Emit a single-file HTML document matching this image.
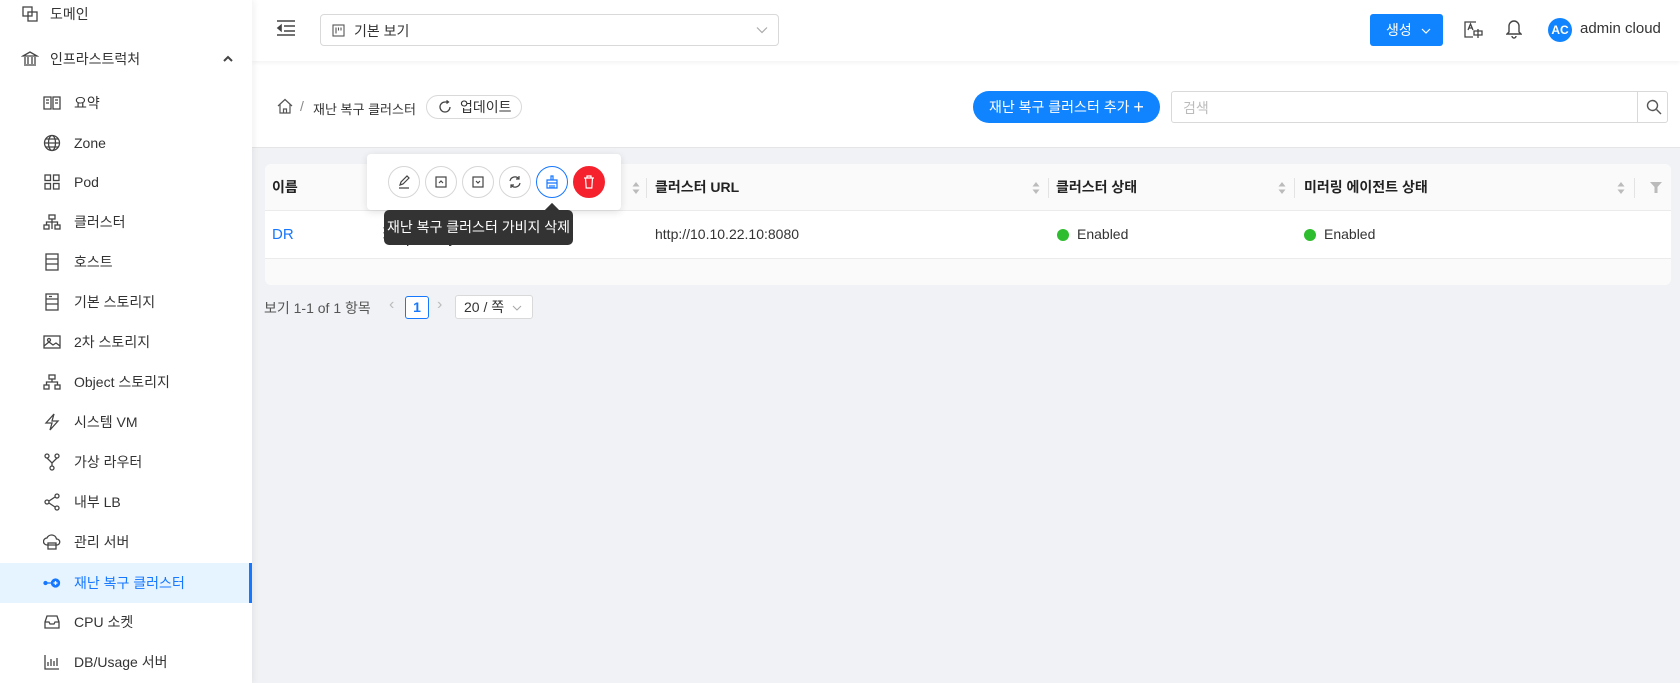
<!DOCTYPE html>
<html><head><meta charset="utf-8"><style>
*{box-sizing:border-box;margin:0;padding:0}
body{width:1680px;height:683px;overflow:hidden;font-family:"Liberation Sans","Noto Sans CJK KR",sans-serif;font-size:14px;color:#333;background:#f0f2f5;position:relative}
.abs{position:absolute}
.side{left:0;top:0;width:252px;height:683px;background:#fff;box-shadow:2px 0 6px rgba(0,0,0,.06);z-index:2}
.it{position:absolute;left:0;width:252px;height:40px;display:flex;align-items:center;font-size:14px;color:#333}
.it svg{position:absolute;width:18px;height:18px;fill:none;stroke:#444;stroke-width:1.3}
.it .t{position:absolute}
.sel{background:#e6f4ff;color:#1677ff;border-right:3px solid #1677ff}
.hdr{left:252px;top:0;width:1428px;height:61px;background:#fff;box-shadow:0 2px 4px rgba(0,0,0,.05);z-index:1}
.bread{left:252px;top:61px;width:1428px;height:87px;background:#fff;border-bottom:1px solid #e5e5e5}
.card{left:265px;top:164px;width:1406px;height:121px;background:#fafafa;border-radius:6px;overflow:hidden}
.th{position:absolute;top:0;height:47px;line-height:47px;font-weight:bold;font-size:14px;color:#222}
.div{position:absolute;top:14px;width:1px;height:20px;background:#e3e3e3}
.sort{position:absolute;top:17px;width:8px;height:14px}
.cbtn{position:absolute;top:166px;width:32px;height:32px;border-radius:50%;border:1px solid #d6d6d6;background:#fff;display:flex;align-items:center;justify-content:center}
.cbtn svg{width:16px;height:16px;fill:none;stroke:#444;stroke-width:1.2}
</style></head><body>
<div class="abs side">
 <div class="it" style="top:-6px"><svg style="left:21px" viewBox="0 0 18 18"><rect x="2" y="2" width="9" height="9"/><rect x="7" y="7" width="9" height="9"/></svg><span class="t" style="left:50px">도메인</span></div>
 <div class="it" style="top:39px"><svg style="left:21px" viewBox="0 0 18 18"><path d="M2 6L9 2l7 4H2zM3 15h12M4 7v7M7 7v7M11 7v7M14 7v7"/></svg><span class="t" style="left:50px">인프라스트럭처</span><svg style="left:222px;width:12px" viewBox="0 0 12 18"><path d="M2 11l4-4 4 4" stroke-width="2"/></svg></div>
 <div class="it" style="top:83px"><svg style="left:43px" viewBox="0 0 18 18"><path d="M1 3h7v12H1zM10 3h7v12h-7zM3 6h3M3 9h3M12 6h3M12 9h3"/></svg><span class="t" style="left:74px">요약</span></div>
 <div class="it" style="top:123px"><svg style="left:43px" viewBox="0 0 18 18"><circle cx="9" cy="9" r="7.5"/><ellipse cx="9" cy="9" rx="3.5" ry="7.5"/><path d="M1.5 9h15M3 5h12M3 13h12"/></svg><span class="t" style="left:74px">Zone</span></div>
 <div class="it" style="top:162px"><svg style="left:43px" viewBox="0 0 18 18"><rect x="2" y="2" width="5.5" height="5.5"/><rect x="10.5" y="2" width="5.5" height="5.5"/><rect x="2" y="10.5" width="5.5" height="5.5"/><rect x="10.5" y="10.5" width="5.5" height="5.5"/></svg><span class="t" style="left:74px">Pod</span></div>
 <div class="it" style="top:202px"><svg style="left:43px" viewBox="0 0 18 18"><rect x="6" y="2" width="6" height="4"/><rect x="1" y="12" width="5" height="4"/><rect x="12" y="12" width="5" height="4"/><path d="M9 6v3M3.5 12V9h11v3M9 9v7"/></svg><span class="t" style="left:74px">클러스터</span></div>
 <div class="it" style="top:242px"><svg style="left:43px" viewBox="0 0 18 18"><rect x="3" y="1" width="12" height="16"/><path d="M3 6h12M3 11h12"/></svg><span class="t" style="left:74px">호스트</span></div>
 <div class="it" style="top:282px"><svg style="left:43px" viewBox="0 0 18 18"><rect x="3" y="1" width="12" height="16"/><path d="M3 6h12M3 11h12M6 3.5h3"/></svg><span class="t" style="left:74px">기본 스토리지</span></div>
 <div class="it" style="top:322px"><svg style="left:43px" viewBox="0 0 18 18"><rect x="1" y="3" width="16" height="12"/><circle cx="6" cy="7" r="1.5"/><path d="M1 13l5-4 4 3 3-2 4 3"/></svg><span class="t" style="left:74px">2차 스토리지</span></div>
 <div class="it" style="top:362px"><svg style="left:43px" viewBox="0 0 18 18"><rect x="6" y="2" width="6" height="4"/><rect x="1" y="12" width="5" height="4"/><rect x="12" y="12" width="5" height="4"/><path d="M9 6v3M3.5 12V9h11v3"/></svg><span class="t" style="left:74px">Object 스토리지</span></div>
 <div class="it" style="top:402px"><svg style="left:43px" viewBox="0 0 18 18"><path d="M11 1L3 10h6l-2 7 8-9H9z"/></svg><span class="t" style="left:74px">시스템 VM</span></div>
 <div class="it" style="top:442px"><svg style="left:43px" viewBox="0 0 18 18"><circle cx="4" cy="3" r="2"/><circle cx="14" cy="3" r="2"/><circle cx="9" cy="15" r="2"/><path d="M4 5l5 5 5-5M9 10v3"/></svg><span class="t" style="left:74px">가상 라우터</span></div>
 <div class="it" style="top:482px"><svg style="left:43px" viewBox="0 0 18 18"><circle cx="4" cy="9" r="2"/><circle cx="14" cy="3" r="2"/><circle cx="14" cy="15" r="2"/><path d="M6 8l6-4M6 10l6 4"/></svg><span class="t" style="left:74px">내부 LB</span></div>
 <div class="it" style="top:522px"><svg style="left:43px" viewBox="0 0 18 18"><path d="M4 12a3.5 3.5 0 010-7 5 5 0 019.5 1A3 3 0 0114 12z"/><rect x="5" y="10" width="8" height="6"/></svg><span class="t" style="left:74px">관리 서버</span></div>
 <div class="it sel" style="top:563px"><svg style="left:43px;stroke:#1677ff" viewBox="0 0 18 18"><circle cx="2.5" cy="9" r="1.5" fill="#1677ff"/><path d="M4 9h5"/><circle cx="12.5" cy="9" r="4" fill="#1677ff"/><path d="M10.5 9h4M12.5 7v4" stroke="#fff"/></svg><span class="t" style="left:74px">재난 복구 클러스터</span></div>
 <div class="it" style="top:602px"><svg style="left:43px" viewBox="0 0 18 18"><path d="M2 9l2-6h10l2 6v6H2zM2 9h4l1 2h4l1-2h4"/></svg><span class="t" style="left:74px">CPU 소켓</span></div>
 <div class="it" style="top:642px"><svg style="left:43px" viewBox="0 0 18 18"><path d="M2 2v14h14M5 13V9M8 13V6M11 13V8M14 13V5"/></svg><span class="t" style="left:74px">DB/Usage 서버</span></div>
</div>

<div class="abs hdr">
 <svg class="abs" style="left:24px;top:19px" width="20" height="18" viewBox="0 0 20 18" fill="none" stroke="#444" stroke-width="1.6"><path d="M1 2h18M8 7h11M8 12h11M1 16h18"/><path d="M5 6.5L2 9l3 2.5z" fill="#444"/></svg>
 <div class="abs" style="left:68px;top:14px;width:459px;height:32px;border:1px solid #d9d9d9;border-radius:4px">
  <svg class="abs" style="left:11px;top:9px" width="13" height="13" viewBox="0 0 13 13" fill="none" stroke="#555" stroke-width="1.1"><rect x="1" y="1" width="11" height="11"/><path d="M4 3.5v6M6.5 3.5v3M9 3.5v3"/></svg>
  <span class="abs" style="left:33px;top:6px;color:#333">기본 보기</span>
  <svg class="abs" style="right:10px;top:11px" width="12" height="8" viewBox="0 0 12 8" fill="none" stroke="#aaa" stroke-width="1.2"><path d="M1 1.5l5 5 5-5"/></svg>
 </div>
 <div class="abs" style="left:1118px;top:14px;width:73px;height:32px;background:#1084ff;border-radius:3px;color:#fff;font-size:14px;line-height:32px;padding-left:16px">생성 <svg style="margin-left:5px;vertical-align:1px" width="10" height="6" viewBox="0 0 10 6" fill="none" stroke="#fff" stroke-width="1.2"><path d="M1 1l4 4 4-4"/></svg></div>
 <svg class="abs" style="left:1211px;top:20px" width="20" height="20" viewBox="0 0 20 20" fill="none" stroke="#444" stroke-width="1.3"><path d="M13 2H2v15h8"/><path d="M5 10l2.5-6 2.5 6M6 8h3"/><path d="M11 11h8v4h-8zM15 9v9"/></svg>
 <svg class="abs" style="left:1254px;top:19px" width="16" height="20" viewBox="0 0 16 20" fill="none" stroke="#444" stroke-width="1.4"><path d="M8 2a5 5 0 015 5v6l2 2H1l2-2V7a5 5 0 015-5zM6 17a2 2 0 004 0"/></svg>
 <div class="abs" style="left:1296px;top:18px;width:24px;height:24px;border-radius:50%;background:#1084ff;color:#fff;font-size:12px;font-weight:bold;text-align:center;line-height:24px">AC</div>
 <span class="abs" style="left:1328px;top:20px;font-size:15px;color:#333">admin cloud</span>
</div>

<div class="abs bread">
 <svg class="abs" style="left:25px;top:37px" width="16" height="16" viewBox="0 0 16 16" fill="none" stroke="#555" stroke-width="1.2"><path d="M1 8l7-6.5L15 8M3 6.5V15h10V6.5M6.5 15v-4h3v4"/></svg>
 <span class="abs" style="left:48px;top:37px;color:#888">/</span>
 <span class="abs" style="left:61px;top:38px;color:#333;font-size:13px">재난 복구 클러스터</span>
 <div class="abs" style="left:174px;top:34px;width:96px;height:24px;border:1px solid #d9d9d9;border-radius:12px;padding-left:33px;line-height:22px;color:#333">업데이트
  <svg class="abs" style="left:11px;top:4px" width="14" height="14" viewBox="0 0 14 14" fill="none" stroke="#444" stroke-width="1.3"><path d="M12 7A5 5 0 117 2h3"/><path d="M8.5 0.5L10.5 2 8.5 3.5"/></svg></div>
 <div class="abs" style="left:721px;top:30px;width:187px;height:32px;background:#1084ff;border-radius:16px;color:#fff;line-height:32px;padding-left:16px">재난 복구 클러스터 추가 <span style="font-size:18px;vertical-align:-1px">+</span></div>
 <div class="abs" style="left:919px;top:30px;width:497px;height:32px;border:1px solid #d9d9d9;border-radius:3px;background:#fff">
  <span class="abs" style="left:11px;top:6px;color:#bbb">검색</span>
  <div class="abs" style="left:465px;top:-1px;width:1px;height:32px;background:#d9d9d9"></div>
  <svg class="abs" style="left:474px;top:7px" width="16" height="16" viewBox="0 0 16 16" fill="none" stroke="#555" stroke-width="1.4"><circle cx="6.5" cy="6.5" r="5"/><path d="M10.5 10.5L15 15"/></svg>
 </div>
</div>

<div class="abs card">
 <div class="abs" style="left:0;top:0;width:1406px;height:47px;background:#fafafa;border-bottom:1px solid #ebebeb"></div>
 <span class="th" style="left:7px">이름</span>
 <svg class="sort" style="left:367px" viewBox="0 0 8 14" fill="#bbb"><path d="M4 1l3.5 4.5h-7zM4 13L.5 8.5h7z"/></svg>
 <div class="div" style="left:381px"></div>
 <span class="th" style="left:390px">클러스터 URL</span>
 <svg class="sort" style="left:767px" viewBox="0 0 8 14" fill="#bbb"><path d="M4 1l3.5 4.5h-7zM4 13L.5 8.5h7z"/></svg>
 <div class="div" style="left:783px"></div>
 <span class="th" style="left:791px">클러스터 상태</span>
 <svg class="sort" style="left:1013px" viewBox="0 0 8 14" fill="#bbb"><path d="M4 1l3.5 4.5h-7zM4 13L.5 8.5h7z"/></svg>
 <div class="div" style="left:1029px"></div>
 <span class="th" style="left:1039px">미러링 에이전트 상태</span>
 <svg class="sort" style="left:1352px" viewBox="0 0 8 14" fill="#bbb"><path d="M4 1l3.5 4.5h-7zM4 13L.5 8.5h7z"/></svg>
 <div class="div" style="left:1369px"></div>
 <svg class="abs" style="left:1385px;top:18px" width="12" height="11" viewBox="0 0 12 11" fill="#bbb"><path d="M0 0h12L7.5 5v6h-3V5z"/></svg>
 <div class="abs" style="left:0;top:47px;width:1406px;height:48px;background:#fff;border-bottom:1px solid #ebebeb"></div>
 <span class="abs" style="left:7px;top:62px;color:#1677ff;font-size:15px">DR</span>
 <span class="abs" style="left:112px;top:60px;color:#888">⋮</span>
 <span class="abs" style="left:141px;top:66px;color:#333;font-size:15px">primary</span>
 <span class="abs" style="left:390px;top:62px;color:#333;font-size:14px">http://10.10.22.10:8080</span>
 <div class="abs" style="left:792px;top:65px;width:12px;height:12px;border-radius:50%;background:#2ebd2e"></div>
 <span class="abs" style="left:812px;top:62px;font-size:14px">Enabled</span>
 <div class="abs" style="left:1039px;top:65px;width:12px;height:12px;border-radius:50%;background:#2ebd2e"></div>
 <span class="abs" style="left:1059px;top:62px;font-size:14px">Enabled</span>
</div>

<span class="abs" style="left:264px;top:298px;color:#555">보기 1-1 of 1 항목</span>
<span class="abs" style="left:389px;top:296px;color:#bbb;font-size:16px">‹</span>
<div class="abs" style="left:405px;top:296px;width:24px;height:23px;border:1px solid #1677ff;border-radius:3px;background:#fff;color:#1677ff;text-align:center;line-height:21px;font-weight:bold">1</div>
<span class="abs" style="left:437px;top:296px;color:#bbb;font-size:16px">›</span>
<div class="abs" style="left:455px;top:295px;width:78px;height:24px;border:1px solid #d9d9d9;border-radius:3px;background:#fff;padding-left:8px;line-height:22px;color:#333">20 / 쪽 <svg style="margin-left:4px;vertical-align:1px" width="10" height="6" viewBox="0 0 10 6" fill="none" stroke="#aaa" stroke-width="1.1"><path d="M1 1l4 4 4-4"/></svg></div>

<div class="abs" style="left:367px;top:154px;width:254px;height:56px;background:#fff;border-radius:4px;box-shadow:0 2px 8px rgba(0,0,0,.12)"></div>
<div class="cbtn" style="left:388px"><svg viewBox="0 0 16 16"><path d="M4 11l1-3 6-6 2 2-6 6zM3 14h10"/></svg></div>
<div class="cbtn" style="left:425px"><svg viewBox="0 0 16 16"><rect x="3" y="3" width="10" height="10"/><path d="M6 9l2-2 2 2"/></svg></div>
<div class="cbtn" style="left:462px"><svg viewBox="0 0 16 16"><rect x="3" y="3" width="10" height="10"/><path d="M6 7l2 2 2-2"/></svg></div>
<div class="cbtn" style="left:499px"><svg viewBox="0 0 16 16"><path d="M3 7a5 5 0 019-2M13 9a5 5 0 01-9 2M12 2v3H9M4 14v-3h3"/></svg></div>
<div class="cbtn" style="left:536px;border-color:#1677ff"><svg viewBox="0 0 16 16" style="stroke:#1677ff"><path d="M7 2h2v4H7zM3 6h10v3H3zM3 9v5h10V9M6 11v3M10 11v3M8 11v3"/></svg></div>
<div class="cbtn" style="left:573px;background:#f5222d;border-color:#f5222d"><svg viewBox="0 0 16 16" style="stroke:#fff"><path d="M3 4h10M6 4V2h4v2M4.5 4l.7 10h5.6l.7-10"/></svg></div>
<div class="abs" style="left:547px;top:205px;width:10px;height:10px;background:#333;transform:rotate(45deg)"></div>
<div class="abs" style="left:384px;top:210px;width:189px;height:35px;background:#333;border-radius:5px;color:#fff;font-size:14px;line-height:35px;text-align:center">재난 복구 클러스터 가비지 삭제</div>
</body></html>
